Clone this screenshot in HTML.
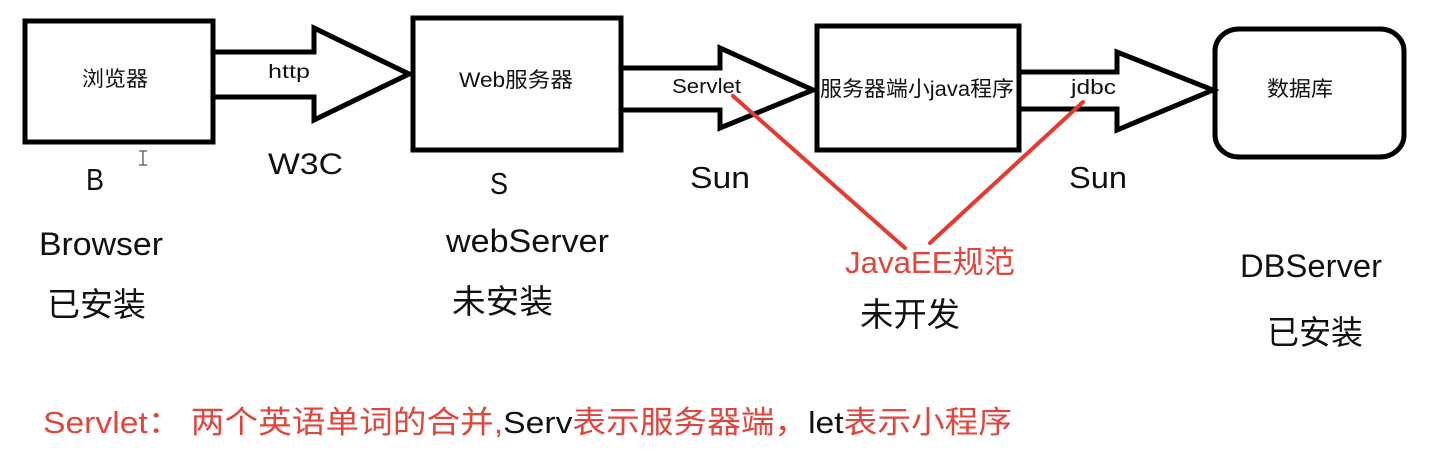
<!DOCTYPE html>
<html><head><meta charset="utf-8"><style>
html,body{margin:0;padding:0;background:#fff;}
svg{display:block;}
text{font-family:"Liberation Sans","Noto Sans CJK SC",sans-serif;fill:#111;}
.r{fill:#e2453c;}
</style></head><body>
<svg width="1451" height="456" viewBox="0 0 1451 456" xmlns="http://www.w3.org/2000/svg">
<g fill="none" stroke="#000" stroke-width="5" stroke-linejoin="miter">
<rect x="25" y="21" width="188" height="121"/>
<polyline points="213,52 314,52 314,28 409,74 314,120 314,97 213,97"/>
<rect x="413" y="18" width="208" height="132"/>
<polyline points="621,68 720,68 720,48 813,90 720,128 720,110 621,110"/>
<rect x="817" y="26" width="202" height="124"/>
<polyline points="1019,72 1117,72 1117,52 1213,90 1117,130 1117,109 1019,109"/>
<rect x="1215" y="29" width="189" height="128" rx="24" ry="22"/>
</g>
<g stroke="#e53a30" stroke-width="4" stroke-linecap="round">
<line x1="733" y1="96" x2="905" y2="248"/>
<line x1="1083" y1="102" x2="930" y2="243"/>
</g>
<path d="M139 151h8M143 151v14M139 165h8" stroke="#555" stroke-width="1.3" fill="none"/>

<text x="82" y="86" font-size="21" textLength="66" lengthAdjust="spacingAndGlyphs">浏览器</text>
<text x="268" y="78" font-size="19" textLength="42" lengthAdjust="spacingAndGlyphs">http</text>
<text x="459" y="87" font-size="21" textLength="114" lengthAdjust="spacingAndGlyphs">Web服务器</text>
<text x="672" y="93" font-size="20" textLength="69" lengthAdjust="spacingAndGlyphs">Servlet</text>
<text x="820" y="96" font-size="21" textLength="194" lengthAdjust="spacingAndGlyphs">服务器端小java程序</text>
<text x="1071" y="94" font-size="20" textLength="45" lengthAdjust="spacingAndGlyphs">jdbc</text>
<text x="1267" y="96" font-size="21" textLength="66" lengthAdjust="spacingAndGlyphs">数据库</text>

<text x="86" y="190" font-size="31" textLength="18" lengthAdjust="spacingAndGlyphs">B</text>
<text x="268" y="174" font-size="30" textLength="75" lengthAdjust="spacingAndGlyphs">W3C</text>
<text x="490" y="194" font-size="31" textLength="18" lengthAdjust="spacingAndGlyphs">S</text>
<text x="690" y="188" font-size="31" textLength="60" lengthAdjust="spacingAndGlyphs">Sun</text>
<text x="1069" y="188" font-size="31" textLength="58" lengthAdjust="spacingAndGlyphs">Sun</text>

<text x="39" y="255" font-size="32" textLength="124" lengthAdjust="spacingAndGlyphs">Browser</text>
<text x="446" y="252" font-size="32" textLength="163" lengthAdjust="spacingAndGlyphs">webServer</text>
<text class="r" x="845" y="273" font-size="31" textLength="170" lengthAdjust="spacingAndGlyphs">JavaEE规范</text>
<text x="1240" y="277" font-size="32" textLength="142" lengthAdjust="spacingAndGlyphs">DBServer</text>

<text x="47" y="316" font-size="33" textLength="99" lengthAdjust="spacingAndGlyphs">已安装</text>
<text x="452" y="313" font-size="33" textLength="101" lengthAdjust="spacingAndGlyphs">未安装</text>
<text x="860" y="326" font-size="33" textLength="100" lengthAdjust="spacingAndGlyphs">未开发</text>
<text x="1267" y="344" font-size="33" textLength="96" lengthAdjust="spacingAndGlyphs">已安装</text>

<text x="43" y="433" font-size="31" textLength="969" lengthAdjust="spacingAndGlyphs"><tspan class="r">Servlet： 两个英语单词的合并,</tspan><tspan>Serv</tspan><tspan class="r">表示服务器端，</tspan><tspan>let</tspan><tspan class="r">表示小程序</tspan></text>
</svg>
</body></html>
